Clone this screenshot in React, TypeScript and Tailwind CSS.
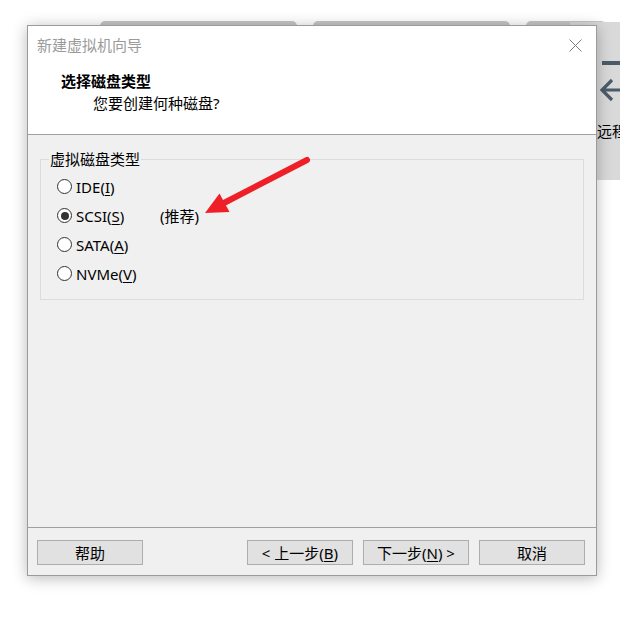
import type { ReactNode } from 'react';

// Mnemonic letter, underlined like a Windows accelerator key
function Key({ children }: { children: ReactNode }) {
  return <span className="underline underline-offset-2">{children}</span>;
}

function Radio({ checked, children }: { checked?: boolean; children: ReactNode }) {
  return (
    <div className="flex h-[29px] items-center pl-[16px]">
      <span className="flex h-[15px] w-[15px] items-center justify-center rounded-full border border-[#333] bg-white">
        {checked && <span className="h-[8px] w-[8px] rounded-full bg-[#333]" />}
      </span>
      <div className="ml-[4px] flex items-center">{children}</div>
    </div>
  );
}

function WinButton({ children }: { children: ReactNode }) {
  return (
    <button className="flex h-[25px] w-[106px] items-center justify-center border border-[#adadad] bg-[#e1e1e1] text-[15px] leading-[20px] text-black">
      {children}
    </button>
  );
}

export default function App() {
  return (
    <div className="relative h-[617px] w-[620px] overflow-hidden bg-white font-['Noto_Sans','Noto_Sans_CJK_SC',sans-serif] text-[15px] leading-[20px] text-black">
      {/* Window behind the dialog: tab tops and the side panel */}
      <div className="absolute left-[100px] top-[21px] h-[10px] w-[197px] rounded-t-[5px] bg-[#c6c6c6]" />
      <div className="absolute left-[313px] top-[21px] h-[10px] w-[197px] rounded-t-[5px] bg-[#c6c6c6]" />
      <div className="absolute left-[526px] top-[21px] h-[10px] w-[80px] rounded-t-[5px] bg-[#c6c6c6]" />
      <div className="absolute left-[570px] top-[22px] h-[158px] w-[50px] bg-[#d9d9d9]">
        <div className="absolute left-[32px] top-[39px] h-[4px] w-[30px] bg-[#4b5b69]" />
        <svg className="absolute left-[30px] top-[56px]" width="24" height="24" viewBox="0 0 24 24" aria-hidden="true">
          <path d="M12 2 L2 12 L12 22 M2 12 H24" fill="none" stroke="#4b5b69" strokeWidth="3.2" />
        </svg>
        <div className="absolute left-[12px] top-[99px] whitespace-nowrap">到远程服务器</div>
      </div>

      {/* Dialog */}
      <div className="absolute left-[27px] top-[25px] flex h-[551px] w-[570px] flex-col border border-[#9b9b9b] bg-[#f0f0f0] shadow-[0_2px_14px_rgba(0,0,0,0.28)]">
        {/* Title + header */}
        <div className="h-[109px] border-b border-[#a0a0a0] bg-white">
          <div className="flex h-[38px] items-center justify-between pl-[9px] pr-[14px]">
            <span className="text-[#9a9a9a]">新建虚拟机向导</span>
            <svg width="13" height="13" viewBox="0 0 13 13" aria-hidden="true">
              <path d="M0.5 0.5 L12.5 12.5 M12.5 0.5 L0.5 12.5" stroke="#7a7a7a" strokeWidth="1" />
            </svg>
          </div>
          <div className="mt-[7px] pl-[33px] font-bold">选择磁盘类型</div>
          <div className="mt-[2px] pl-[65px]">您要创建何种磁盘?</div>
        </div>

        {/* Body */}
        <div className="flex-1 px-[12px] pt-[14px]">
          <fieldset className="border border-[#dcdcdc] pb-[11px]">
            <legend className="ml-[8px] px-[1px] leading-[20px]">虚拟磁盘类型</legend>
            <div className="mt-[3px] flex flex-col">
              <Radio>
                IDE(<Key>I</Key>)
              </Radio>
              <Radio checked>
                <span className="w-[84px]">
                  SCSI(<Key>S</Key>)
                </span>
                <span>(推荐)</span>
              </Radio>
              <Radio>
                SATA(<Key>A</Key>)
              </Radio>
              <Radio>
                NVMe(<Key>V</Key>)
              </Radio>
            </div>
          </fieldset>
        </div>

        {/* Footer */}
        <div className="flex h-[48px] items-start border-t border-[#a0a0a0] pl-[9px] pr-[11px] pt-[12px]">
          <WinButton>帮助</WinButton>
          <div className="ml-auto flex gap-[10px]">
            <WinButton>
              &lt; 上一步(<Key>B</Key>)
            </WinButton>
            <WinButton>
              下一步(<Key>N</Key>) &gt;
            </WinButton>
            <WinButton>取消</WinButton>
          </div>
        </div>
      </div>

      {/* Red annotation arrow */}
      <svg className="pointer-events-none absolute left-0 top-0" width="620" height="617" aria-hidden="true">
        <line x1="307" y1="160" x2="222" y2="204" stroke="#ee1f27" strokeWidth="6" strokeLinecap="round" />
        <polygon points="205,213 219.5,193.5 229.5,212" fill="#ee1f27" />
      </svg>
    </div>
  );
}
